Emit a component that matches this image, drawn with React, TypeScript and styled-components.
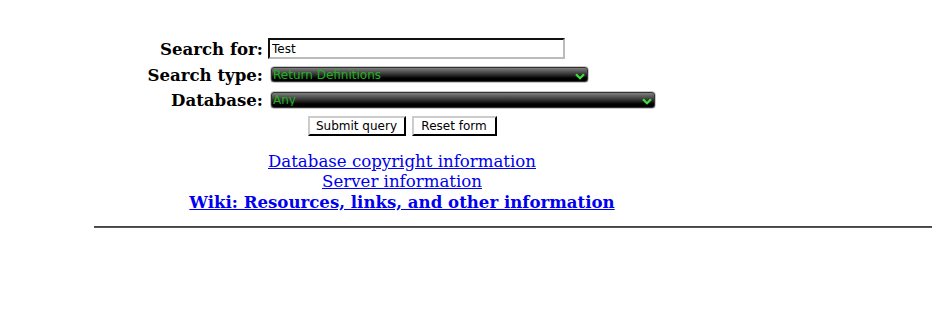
import React from "react";
import styled, { createGlobalStyle } from "styled-components";

const Global = createGlobalStyle`
  html, body { margin: 0; padding: 0; background: #fff; }
  body { font-family: "DejaVu Serif", serif; }
`;

const Page = styled.div`
  width: 804px;
  padding-top: 36px;
  display: flex;
  flex-direction: column;
  align-items: center;
`;

const FormGrid = styled.form`
  display: grid;
  grid-template-columns: 122px 390px;
  grid-template-rows: 25px 27px 24px 28px;
  align-items: center;
`;

const Label = styled.label`
  justify-self: end;
  padding-right: 5px;
  font-family: "DejaVu Serif", serif;
  font-weight: bold;
  font-size: 16.6px;
  color: #000;
  white-space: nowrap;
`;

const TextInput = styled.input`
  box-sizing: border-box;
  width: 297px;
  height: 21px;
  margin: 0;
  padding: 0 2px;
  border: 2px solid;
  border-color: #111 #bbb #bbb #111;
  font-family: "DejaVu Sans", sans-serif;
  font-size: 12px;
  color: #000;
  background: #fff;
  outline: none;
`;

const SelectWrap = styled.div<{ $w: number; $h: number }>`
  position: relative;
  margin-left: 2px;
  width: ${(p) => p.$w}px;
  height: ${(p) => p.$h}px;
`;

const Select = styled.select`
  appearance: none;
  -webkit-appearance: none;
  display: block;
  box-sizing: border-box;
  width: 100%;
  height: 100%;
  margin: 0;
  padding: 0 20px 0 2px;
  border: 1px solid #c8c8c8;
  border-radius: 4px;
  box-shadow: inset 0 0 0 1px #333;
  background: linear-gradient(#8a8a8a 0%, #3a3a3a 45%, #000 75%, #000 100%);
  color: #22b022;
  font-family: "DejaVu Sans", sans-serif;
  font-size: 12px;
  line-height: 1;
  outline: none;
`;

const Chevron = styled.svg`
  position: absolute;
  right: 4px;
  top: 7px;
  pointer-events: none;
`;

const ButtonRow = styled.div`
  grid-column: 1 / span 2;
  display: flex;
  justify-content: center;
  gap: 6px;
`;

const Button = styled.button<{ $w: number }>`
  box-sizing: border-box;
  width: ${(p) => p.$w}px;
  height: 20px;
  margin: 0;
  padding: 0;
  border: 2px solid;
  border-color: #ccc #000 #000 #ccc;
  background: #fff;
  font-family: "DejaVu Sans", sans-serif;
  font-size: 12px;
  color: #000;
`;

const Links = styled.div`
  margin-top: 12px;
  display: flex;
  flex-direction: column;
  align-items: center;
  line-height: 20px;
  font-size: 16.6px;
`;

const Link = styled.a<{ $bold?: boolean }>`
  color: #0000ee;
  text-decoration: underline;
  font-family: "DejaVu Serif", serif;
  font-weight: ${(p) => (p.$bold ? "bold" : "normal")};
`;

const Rule = styled.hr`
  margin: 14px 0 0 94px;
  width: 838px;
  height: 0;
  border: 0;
  border-top: 1px solid #444;
  border-bottom: 1px solid #555;
`;

const Arrow = () => (
  <Chevron width="10" height="7" viewBox="0 0 10 7">
    <path d="M1 1.2 L5 5.2 L9 1.2" fill="none" stroke="#3ee03e" strokeWidth="2.2" />
  </Chevron>
);

export default function App() {
  return (
    <>
      <Global />
      <Page>
        <FormGrid onSubmit={(e) => e.preventDefault()}>
          <Label>Search for:</Label>
          <TextInput defaultValue="Test" />
          <Label>Search type:</Label>
          <SelectWrap $w={319} $h={17}>
            <Select defaultValue="d">
              <option value="d">Return Definitions</option>
            </Select>
            <Arrow />
          </SelectWrap>
          <Label>Database:</Label>
          <SelectWrap $w={386} $h={18}>
            <Select defaultValue="any">
              <option value="any">Any</option>
            </Select>
            <Arrow />
          </SelectWrap>
          <ButtonRow>
            <Button $w={98} type="submit">Submit query</Button>
            <Button $w={85} type="reset">Reset form</Button>
          </ButtonRow>
        </FormGrid>
        <Links>
          <Link href="#">Database copyright information</Link>
          <Link href="#">Server information</Link>
          <Link href="#" $bold>Wiki: Resources, links, and other information</Link>
        </Links>
      </Page>
      <Rule />
    </>
  );
}
